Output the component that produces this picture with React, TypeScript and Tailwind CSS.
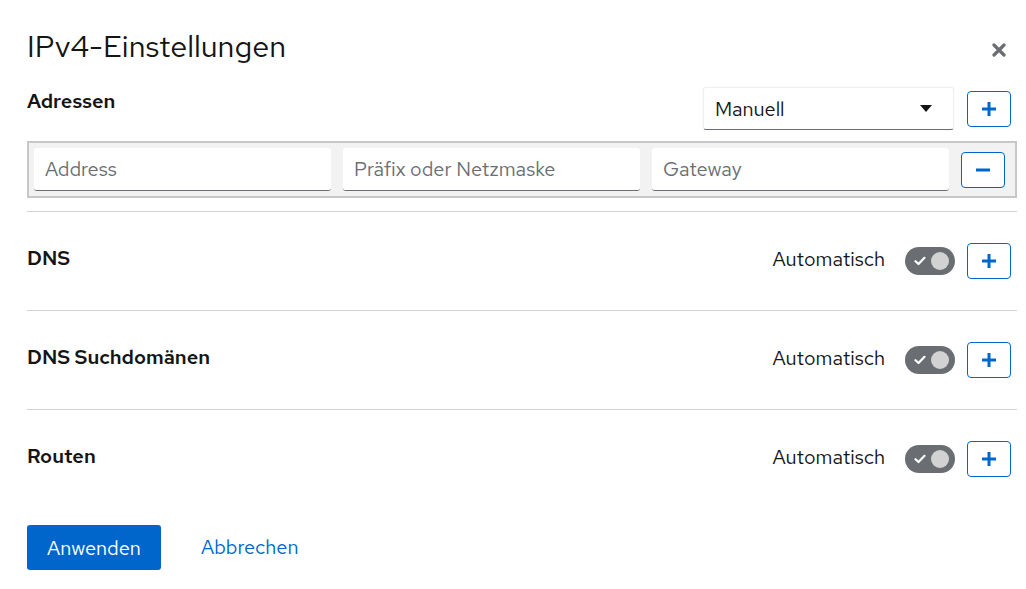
import React from 'react';

const font = { fontFamily: '"Red Hat Text", "Open Sans", "Noto Sans", sans-serif' };

function PlusIcon({ minus = false }: { minus?: boolean }) {
  return (
    <svg width="14" height="14" viewBox="0 0 14 14" aria-hidden="true">
      <rect x="0" y="5.5" width="14" height="3" fill="#0066cc" />
      {!minus && <rect x="5.5" y="0" width="3" height="14" fill="#0066cc" />}
    </svg>
  );
}

function AddButton({ minus = false }: { minus?: boolean }) {
  return (
    <button className="flex h-[36px] w-[44px] shrink-0 items-center justify-center rounded-[4px] border border-[#0066cc] bg-white">
      <PlusIcon minus={minus} />
    </button>
  );
}

function Toggle() {
  return (
    <div className="flex h-[28px] w-[50px] items-center justify-between rounded-full bg-[#6a6e73] pl-[9px] pr-[6px]">
      <svg width="12" height="10" viewBox="0 0 12 10" aria-hidden="true">
        <path d="M1.5 5.2 L4.5 8 L10.5 1.8" fill="none" stroke="#fff" strokeWidth="2.2" strokeLinecap="round" strokeLinejoin="round" />
      </svg>
      <span className="h-[18px] w-[18px] rounded-full bg-[#d2d2d2]" />
    </div>
  );
}

function Field({ placeholder }: { placeholder: string }) {
  return (
    <div className="flex h-[43px] flex-1 items-center rounded-[3px] border-b border-[#6a6e73] bg-white px-[11px] text-[20px] text-[#6a6e73]">
      {placeholder}
    </div>
  );
}

function Section({ title }: { title: string }) {
  return (
    <div className="flex h-[99px] items-center justify-between border-t border-[#d2d2d2] pr-[6px]">
      <span className="-mt-[6px] text-[20px] font-semibold text-[#151515]">{title}</span>
      <div className="flex items-center">
        <span className="-mt-[4px] mr-[20px] text-[20px] text-[#151515]">Automatisch</span>
        <Toggle />
        <div className="ml-[12px]">
          <AddButton />
        </div>
      </div>
    </div>
  );
}

export default function App() {
  return (
    <div className="h-[589px] w-[1026px] bg-white pl-[27px] pr-[9px]" style={font}>
      <div className="flex items-start justify-between pt-[26px]">
        <h1 className="text-[30.5px] leading-[40px] text-[#151515]">IPv4-Einstellungen</h1>
        <button className="mr-[11px] mt-[17px] text-[#6a6e73]">
          <svg width="14" height="14" viewBox="0 0 14 14" aria-hidden="true">
            <path d="M2 2 L12 12 M12 2 L2 12" stroke="#6a6e73" strokeWidth="3.2" strokeLinecap="round" />
          </svg>
        </button>
      </div>

      <div className="mt-[21px] flex h-[43px] items-start justify-between pr-[6px]">
        <span className="text-[20px] leading-[28px] font-semibold text-[#151515]">Adressen</span>
        <div className="flex items-center gap-[13px]">
          <div className="flex h-[43px] w-[251px] items-center justify-between rounded-[3px] border border-[#f0f0f0] border-b-[#6a6e73] bg-white pl-[11px] pr-[21px] text-[20px] text-[#151515] shadow-[0_0_2px_rgba(0,0,0,0.06)]">
            Manuell
            <svg width="12" height="8" viewBox="0 0 12 8" aria-hidden="true">
              <path d="M0 0 H12 L6 7 Z" fill="#151515" />
            </svg>
          </div>
          <AddButton />
        </div>
      </div>

      <div className="mt-[11px] flex items-center gap-[12px] border-2 border-[#c7c7c7] bg-[#f2f2f2] py-[5px] pl-[5px] pr-[10px]">
        <Field placeholder="Address" />
        <Field placeholder="Präfix oder Netzmaske" />
        <Field placeholder="Gateway" />
        <AddButton minus />
      </div>

      <div className="mt-[13px]">
        <Section title="DNS" />
        <Section title="DNS Suchdomänen" />
        <Section title="Routen" />
      </div>

      <div className="mt-[17px] flex items-center gap-[40px]">
        <button className="h-[45px] w-[134px] rounded-[3px] bg-[#0066cc] text-[20px] text-white">Anwenden</button>
        <button className="-mt-[1px] text-[20px] text-[#0066cc]">Abbrechen</button>
      </div>
    </div>
  );
}
